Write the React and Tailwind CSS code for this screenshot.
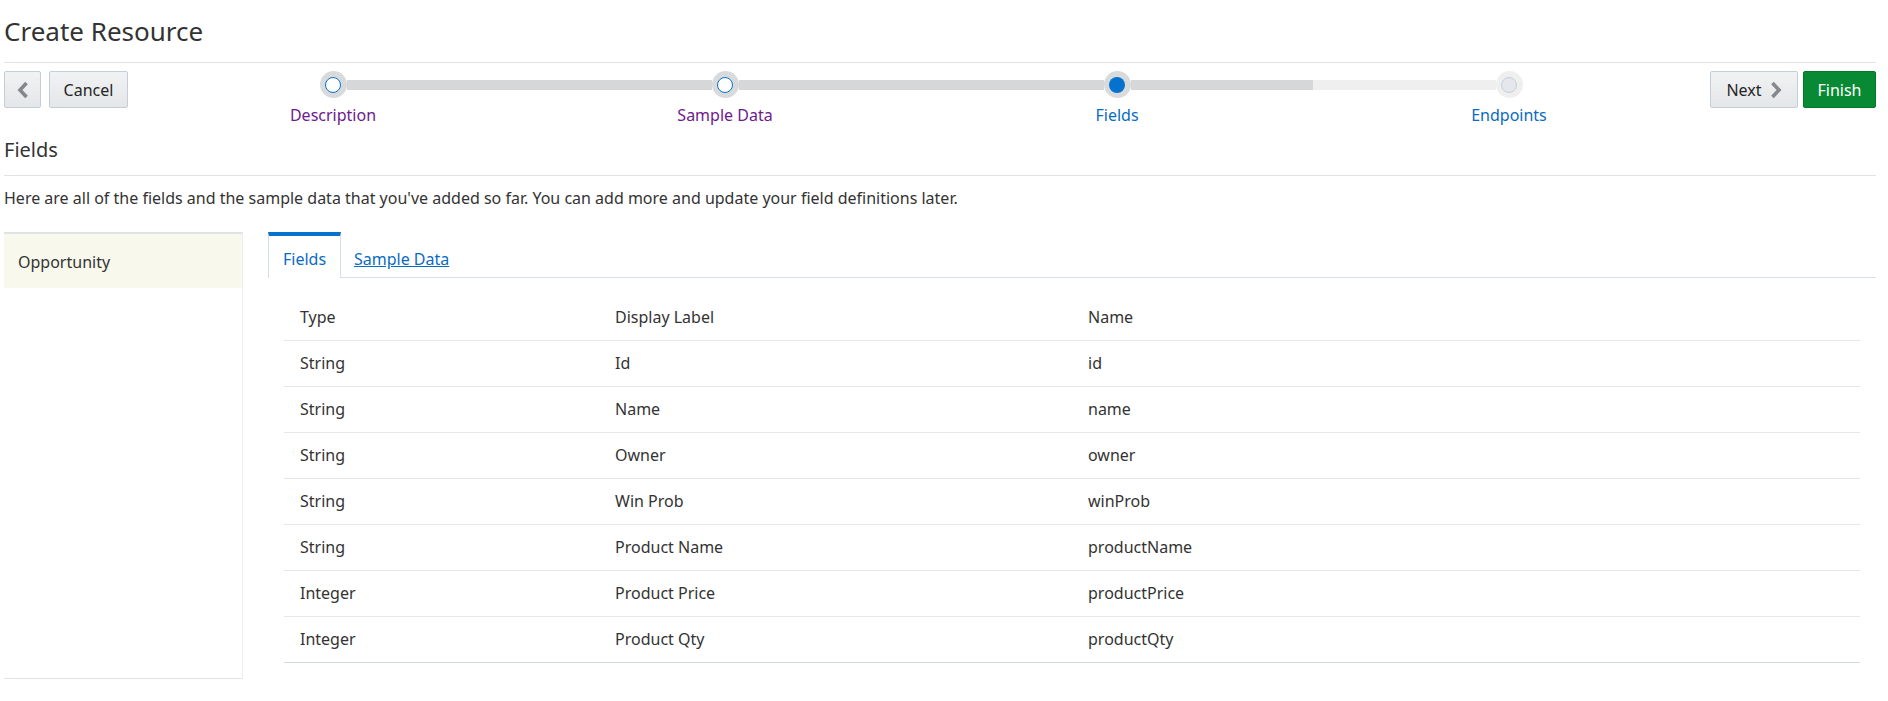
import React from "react";

const steps = [
  { label: "Description", state: "visited", left: "none", right: "dark" },
  { label: "Sample Data", state: "visited", left: "dark", right: "dark" },
  { label: "Fields", state: "current", left: "dark", right: "dark" },
  { label: "Endpoints", state: "future", left: "light", right: "none" },
];

const rows = [
  ["String", "Id", "id"],
  ["String", "Name", "name"],
  ["String", "Owner", "owner"],
  ["String", "Win Prob", "winProb"],
  ["String", "Product Name", "productName"],
  ["Integer", "Product Price", "productPrice"],
  ["Integer", "Product Qty", "productQty"],
];

const trackClass = {
  none: "bg-transparent",
  dark: "bg-[#d6d7d8]",
  light: "bg-[#efefef]",
};

const Chevron = ({ dir = "left" }) => (
  <svg width="12" height="18" viewBox="0 0 12 18">
    <polyline
      points={dir === "left" ? "9.5,2 3,9 9.5,16" : "2.5,2 9,9 2.5,16"}
      fill="none"
      stroke="#84878b"
      strokeWidth="3.6"
    />
  </svg>
);

const Step = ({ step }) => {
  const ring = step.state === "future" ? "bg-[#efefef]" : "bg-[#d9dadb]";
  const inner =
    step.state === "current"
      ? "bg-[#0572ce]"
      : step.state === "visited"
      ? "bg-white border border-[#0572ce]"
      : "bg-[#e4e8ec] border border-[#c6cfd8]";
  const labelColor =
    step.state === "visited" ? "text-[#6c1a8c]" : "text-[#0a6bc1]";
  return (
    <div className="flex flex-col items-center">
      <div className="flex items-center w-full h-[27px]">
        <div className={`flex-1 h-[10px] ${trackClass[step.left]}`} />
        <div
          className={`w-[27px] h-[27px] rounded-full flex items-center justify-center shrink-0 ${ring}`}
        >
          <div className={`w-[16px] h-[16px] rounded-full ${inner}`} />
        </div>
        <div className={`flex-1 h-[10px] ${trackClass[step.right]}`} />
      </div>
      <div className={`mt-[5px] text-[16px] leading-[24px] ${labelColor}`}>
        {step.label}
      </div>
    </div>
  );
};

const btn =
  "h-[37px] rounded-[2px] border border-[#c4ced7] bg-gradient-to-b from-[#f1f2f3] to-[#e4e6e9] text-[16px] text-[#252525] flex items-center justify-center";

export default function App() {
  return (
    <div
      className="w-[1888px] h-[701px] bg-white text-[#333333] pl-[4px] pr-[12px] overflow-hidden"
      style={{ fontFamily: '"Segoe UI", "Noto Sans", sans-serif' }}
    >
      <div className="h-[63px] border-b border-[#dfe3e8] flex items-center">
        <h1 className="text-[26px] leading-[34px] text-[#333333] -mt-[1px]">
          Create Resource
        </h1>
      </div>

      <div className="flex items-start gap-[5px] pt-[8px] h-[67px]">
        <button className={`${btn} w-[37px]`}>
          <Chevron dir="left" />
        </button>
        <button className={`${btn} w-[79px] ml-[3px]`}>Cancel</button>
        <div className="flex-1 grid grid-cols-4 pl-[4px]">
          {steps.map((s) => (
            <Step key={s.label} step={s} />
          ))}
        </div>
        <button className={`${btn} w-[88px] gap-[8px]`}>
          Next
          <Chevron dir="right" />
        </button>
        <button className="h-[37px] w-[73px] rounded-[2px] bg-[#078a33] border border-[#06782c] text-white text-[16px]">
          Finish
        </button>
      </div>

      <div className="h-[46px] border-b border-[#dfe3e8] flex items-center">
        <h2 className="text-[20px] leading-[26px] text-[#333333] -mt-[5px]">
          Fields
        </h2>
      </div>

      <p className="text-[16px] leading-[24px] pt-[10px] pb-[22px]">
        Here are all of the fields and the sample data that you've added so
        far. You can add more and update your field definitions later.
      </p>

      <div className="flex gap-[25px]">
        <div className="w-[239px] h-[447px] border-t-2 border-t-[#dfe3e8] border-r border-r-[#eceff1] border-b border-b-[#dfe3e8] shrink-0">
          <div className="h-[54px] bg-[#f8f9ec] flex items-center pl-[14px] pt-[2px] text-[16px]">
            Opportunity
          </div>
        </div>

        <div className="flex-1">
          <div className="flex border-b border-[#d6dfe6] h-[46px]">
            <div className="w-[73px] border-t-4 border-t-[#0572ce] border-l border-r border-[#d6dfe6] -mb-px bg-white flex items-center justify-center pt-[3px] text-[16px] text-[#0a6bc1]">
              Fields
            </div>
            <div className="px-[13px] flex items-center text-[16px] text-[#0a6bc1] underline pt-[8px]">
              Sample Data
            </div>
          </div>

          <div className="px-[16px] pt-[16px]">
            <table className="w-full text-[16px] border-collapse">
              <thead>
                <tr className="h-[46px] border-b border-[#e5e7ea]">
                  <th className="w-[315px] text-left font-normal pl-[16px]">
                    Type
                  </th>
                  <th className="w-[473px] text-left font-normal pl-[16px]">
                    Display Label
                  </th>
                  <th className="text-left font-normal pl-[16px]">Name</th>
                </tr>
              </thead>
              <tbody>
                {rows.map((r, i) => (
                  <tr
                    key={r[2]}
                    className={`h-[46px] border-b ${
                      i === rows.length - 1
                        ? "border-[#d3d8de]"
                        : "border-[#e5e7ea]"
                    }`}
                  >
                    <td className="pl-[16px]">{r[0]}</td>
                    <td className="pl-[16px]">{r[1]}</td>
                    <td className="pl-[16px]">{r[2]}</td>
                  </tr>
                ))}
              </tbody>
            </table>
          </div>
        </div>
      </div>
    </div>
  );
}
